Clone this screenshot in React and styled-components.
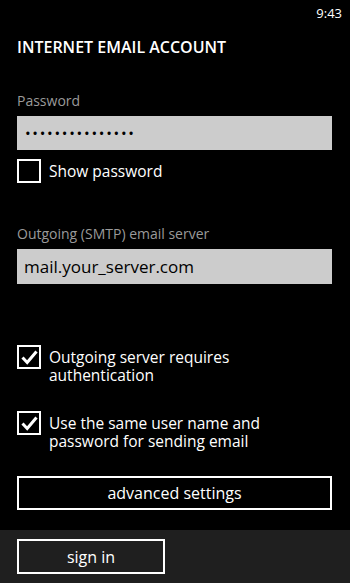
import React from 'react'
import styled, { createGlobalStyle } from 'styled-components'

const GlobalStyle = createGlobalStyle`
    html, body {
        margin: 0;
        padding: 0;
        background: #000;
    }
    body {
        font-family: "Open Sans", "Noto Sans", sans-serif;
        color: #fff;
    }
`

const CheckMark = () => (
    <svg width="17" height="15" viewBox="0 0 17 15">
        <path d="M1.5 7.5 L6.2 12.5 L15.5 1.5" fill="none" stroke="#fff" strokeWidth="3" />
    </svg>
)

const CheckOption = ({checked, children}) => (
    <Option>
        <Box>{checked && <CheckMark />}</Box>
        <OptionText>{children}</OptionText>
    </Option>
)

const App = () => {
    return (
        <>
            <GlobalStyle />
            <Page>
                <StatusBar>9:43</StatusBar>
                <Content>
                    <Title>INTERNET EMAIL ACCOUNT</Title>

                    <Label>Password</Label>
                    <Field>
                        <Dots>
                            {Array.from({length: 15}).map((_, i) => <Dot key={i}>•</Dot>)}
                        </Dots>
                    </Field>
                    <CheckOption>Show password</CheckOption>

                    <Label $top={42}>Outgoing (SMTP) email server</Label>
                    <Field $height={35}>mail.your_server.com</Field>

                    <Options>
                        <CheckOption checked>Outgoing server requires authentication</CheckOption>
                        <CheckOption checked>Use the same user name and password for sending email</CheckOption>
                    </Options>

                    <WideButton>advanced settings</WideButton>
                </Content>
                <AppBar>
                    <SmallButton>sign in</SmallButton>
                </AppBar>
            </Page>
        </>
    )
}

const Page = styled.div`
    width: 350px;
    height: 583px;
    display: flex;
    flex-direction: column;
    background: #000;
    overflow: hidden;
`

const StatusBar = styled.div`
    height: 26px;
    display: flex;
    justify-content: flex-end;
    align-items: center;
    padding-right: 8px;
    font-size: 13px;
    color: #fff;
`

const Content = styled.div`
    flex: 1;
    display: flex;
    flex-direction: column;
    padding: 0 18px 0 17px;
`

const Title = styled.div`
    margin-top: 10px;
    font-size: 16px;
    font-weight: 600;
    line-height: 22px;
`

const Label = styled.div`
    margin-top: ${props => props.$top || 34}px;
    font-size: 14px;
    line-height: 18px;
    color: #9a9a9a;
`

const Field = styled.div`
    margin-top: 6px;
    height: ${props => props.$height || 34}px;
    box-sizing: border-box;
    background: #cccccc;
    color: #000;
    display: flex;
    align-items: center;
    padding: 0 7px;
    font-size: 17px;
`

const Dots = styled.div`
    display: flex;
`

const Dot = styled.span`
    width: 7.4px;
    text-align: center;
    font-size: 15px;
    line-height: 14px;
`

const Option = styled.div`
    display: flex;
    align-items: flex-start;
    gap: 8px;
    margin-top: 9px;
`

const Box = styled.div`
    flex: none;
    width: 24px;
    height: 24px;
    box-sizing: border-box;
    border: 2px solid #fff;
    display: flex;
    align-items: center;
    justify-content: center;
`

const OptionText = styled.div`
    font-size: 15.5px;
    line-height: 18px;
    padding-top: 3px;
    max-width: 250px;
`

const Options = styled.div`
    display: flex;
    flex-direction: column;
    gap: 27px;
    margin-top: 61px;
    & > div {
        margin-top: 0;
    }
`

const WideButton = styled.div`
    margin-top: 26px;
    height: 34px;
    box-sizing: border-box;
    border: 2px solid #fff;
    display: flex;
    align-items: center;
    justify-content: center;
    font-size: 16px;
`

const AppBar = styled.div`
    flex: none;
    height: 53px;
    background: #1f1f1f;
    padding: 9px 17px 0;
    box-sizing: border-box;
`

const SmallButton = styled(WideButton)`
    margin-top: 0;
    width: 148px;
    height: 35px;
`

export default App
